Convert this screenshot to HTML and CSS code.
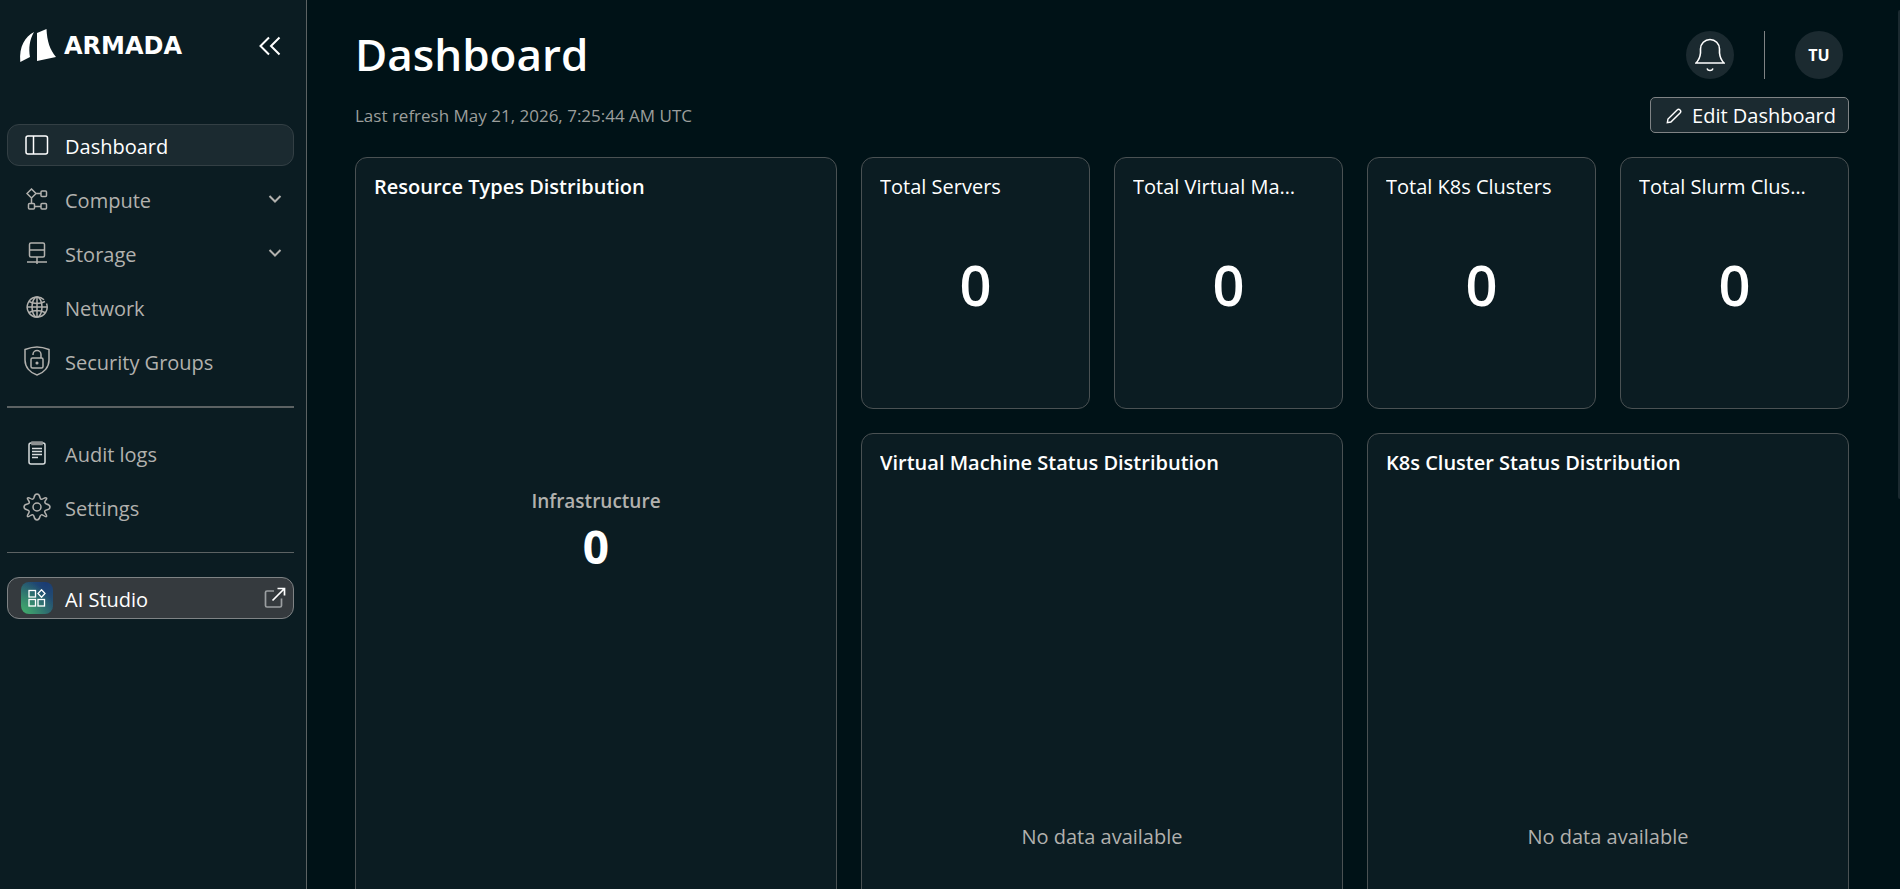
FILE: index.html
```html
<!DOCTYPE html>
<html lang="en">
<head>
  <meta charset="UTF-8" />
  <title>Dashboard</title>
  <meta name="viewport" content="width=device-width, initial-scale=1" />
  <link rel="stylesheet" href="styles.css">
</head>
<body>
  <aside class="sidebar">
    <div class="brand">
      <a class="logo" href="#" aria-label="Armada">
        <svg class="logo-mark" width="38" height="34" viewBox="0 0 38 34" fill="#fff">
          <path d="M15 3C6 8 0 17 1.300 33L11 28C9.500 19 10.500 11 15 3Z"/>
          <path d="M18 4L27.500 0C28 12 31 21 37 28L18 32Z"/>
        </svg>
        <span class="logo-text">ARMADA</span>
      </a>
      <button class="collapse-btn" title="Collapse menu">
        <svg width="22" height="20" viewBox="0 0 22 20" fill="none" stroke="#fff" stroke-width="2"><path d="M10 1.500L1.500 10L10 18.500M20.500 1.500L12 10L20.500 18.500"/></svg>
      </button>
    </div>

    <nav class="menu">
      <a class="menu-item active" href="#">
        <span class="menu-icon"><svg width="24" height="20" viewBox="0 0 24 20" fill="none" stroke="currentColor" stroke-width="1.500"><rect x="1" y="1" width="21.500" height="18" rx="2"/><path d="M8.500 1V19"/></svg></span>
        <span class="menu-label">Dashboard</span>
      </a>
      <a class="menu-item" href="#">
        <span class="menu-icon"><svg width="22" height="22" viewBox="0 0 22 22" fill="none" stroke="currentColor" stroke-width="1.500"><path d="M5.500 1L10 5.500L5.500 10L1 5.500ZM10 5.500H15M5.500 10V15.500M8.500 18.500H15"/><rect x="15" y="3" width="5.500" height="5.500" rx="1"/><rect x="2.500" y="15.500" width="6" height="5.500" rx="1"/><rect x="15" y="15.500" width="5.500" height="5.500" rx="1"/></svg></span>
        <span class="menu-label">Compute</span>
        <svg class="chevron" width="14" height="10" viewBox="0 0 14 10" fill="none" stroke="currentColor" stroke-width="2"><path d="M1.500 2L7 7.500L12.500 2"/></svg>
      </a>
      <a class="menu-item" href="#">
        <span class="menu-icon"><svg width="22" height="22" viewBox="0 0 22 22" fill="none" stroke="currentColor" stroke-width="1.500"><rect x="3.500" y="1" width="15" height="14" rx="1.500"/><path d="M3.500 8H18.500M11 15V22M1 20H21"/></svg></span>
        <span class="menu-label">Storage</span>
        <svg class="chevron" width="14" height="10" viewBox="0 0 14 10" fill="none" stroke="currentColor" stroke-width="2"><path d="M1.500 2L7 7.500L12.500 2"/></svg>
      </a>
      <a class="menu-item" href="#">
        <span class="menu-icon"><svg width="22" height="22" viewBox="0 0 22 22" fill="none" stroke="currentColor" stroke-width="1.500"><path d="M18 3.800A10 10 0 1 0 20.500 7.500M21 11H1"/><ellipse cx="11" cy="11" rx="5" ry="10"/><path d="M11 1V21M3 5.500C8 8 14 8 19 5.500M3 16.500C8 14 14 14 19 16.500"/></svg></span>
        <span class="menu-label">Network</span>
      </a>
      <a class="menu-item" href="#">
        <span class="menu-icon"><svg width="26" height="30" viewBox="0 0 26 30" fill="none" stroke="currentColor" stroke-width="1.500"><path d="M13 1C17 1 21 2 25 3.500V14C25 21 20 27 13 29C6 27 1 21 1 14V3.500C5 2 9 1 13 1Z"/><rect x="7" y="12" width="12" height="10" rx="1.500"/><path d="M9 9V8.500A4 4 0 0 1 17 8.500V12"/><circle cx="13" cy="17" r="0.800" fill="currentColor"/></svg></span>
        <span class="menu-label">Security Groups</span>
      </a>
    </nav>

    <nav class="menu ruled-strong">
      <a class="menu-item" href="#">
        <span class="menu-icon"><svg width="18" height="24" viewBox="0 0 18 24" fill="none" stroke="#d8dcdd" stroke-width="1.500"><rect x="1" y="2" width="16" height="21" rx="2"/><rect x="4" y="1" width="10" height="2.500" fill="#8d9192" stroke="#8d9192"/><path d="M4 7.500H14M4 10.500H14M4 13.500H14M4 16.500H10"/></svg></span>
        <span class="menu-label">Audit logs</span>
      </a>
      <a class="menu-item" href="#">
        <span class="menu-icon"><svg width="28" height="28" viewBox="0 0 28 28" fill="none" stroke="currentColor" stroke-width="1.500"><circle cx="14" cy="14" r="4"/><path d="M11 4.500C11.500 2 12.500 1 14 1S16.500 2 17 4.500S19 6.500 20.500 5.500S23 4.500 23.500 5S23.500 6.500 22.500 7.500S21.500 10.500 23.500 11S27 12.500 27 14S26 16.500 23.500 17S21.500 19 22.500 20.500S24 23 23.500 23.500S22 23.500 20.500 22.500S17.500 21.500 17 23.500S15.500 27 14 27S11.500 26 11 23.500S9 21.500 7.500 22.500S5 24 4.500 23.500S4.500 22 5.500 20.500S6.500 17.500 4.500 17S1 15.500 1 14S2 11.500 4.500 11S6.500 9 5.500 7.500S4 5.500 4.500 5S6 4.500 7.500 5.500S10.500 6.500 11 4.500Z"/></svg></span>
        <span class="menu-label">Settings</span>
      </a>
    </nav>

    <nav class="menu">
      <a class="menu-item studio" href="#">
        <span class="studio-icon"><svg width="18" height="18" viewBox="0 0 18 18" fill="none" stroke="#fff" stroke-width="1.300"><rect x="1" y="1.500" width="6.500" height="6.500"/><path d="M13.500 0.800L17 4.500L13.500 8.200L10 4.500Z"/><rect x="1" y="10.500" width="6.500" height="6.500"/><rect x="10" y="10.500" width="6.500" height="6.500"/></svg></span>
        <span class="menu-label">AI Studio</span>
        <svg class="external" width="22" height="22" viewBox="0 0 22 22" fill="none" stroke-width="1.700"><path stroke="#9b9fa1" d="M10 4H3C2 4 1.500 4.500 1.500 5.500V18.500C1.500 19.500 2 20 3 20H16C17 20 17.500 19.500 17.500 18.500V11.500"/><path stroke="#fff" d="M8.500 13.500L20.500 1.500M13.500 1.500H20.500V8.500"/></svg>
      </a>
    </nav>
  </aside>

  <main class="content">
    <header class="topbar">
      <h1>Dashboard</h1>
      <div class="user-tools">
        <button class="round-btn" title="Notifications">
          <svg width="30" height="34" viewBox="0 0 30 34" fill="none" stroke="#fff" stroke-width="1.600"><path d="M1 25H29C26 22 25 20 24.500 15V11A9.500 9.500 0 0 0 5.500 11V15C5 20 4 22 1 25Z"/><path d="M12 30.500C13 33.200 17 33.200 18 30.500"/></svg>
        </button>
        <span class="divider"></span>
        <button class="round-btn avatar" title="Account">TU</button>
      </div>
    </header>

    <div class="subbar">
      <p class="refresh">Last refresh May 21, 2026, 7:25:44 AM UTC</p>
      <button class="edit-btn">
        <svg width="16" height="16" viewBox="0 0 18 18" fill="none" stroke="#fff" stroke-width="1.600"><path d="M1.500 16.500L2.200 12.500L12.500 2.200C13.500 1.200 14.800 1.200 15.800 2.200S16.800 4.500 15.800 5.500L5.500 15.800Z"/></svg>
        Edit Dashboard
      </button>
    </div>

    <section class="widgets">
      <article class="card tall">
        <h2>Resource Types Distribution</h2>
        <div class="chart-center">
          <span class="chart-label">Infrastructure</span>
          <span class="chart-total">0</span>
        </div>
      </article>
      <article class="card stat">
        <h3>Total Servers</h3>
        <div class="stat-value">0</div>
      </article>
      <article class="card stat">
        <h3>Total Virtual Machines</h3>
        <div class="stat-value">0</div>
      </article>
      <article class="card stat">
        <h3>Total K8s Clusters</h3>
        <div class="stat-value">0</div>
      </article>
      <article class="card stat">
        <h3>Total Slurm Clusters</h3>
        <div class="stat-value">0</div>
      </article>
      <article class="card wide">
        <h2>Virtual Machine Status Distribution</h2>
        <p class="empty">No data available</p>
      </article>
      <article class="card wide">
        <h2>K8s Cluster Status Distribution</h2>
        <p class="empty">No data available</p>
      </article>
    </section>
  </main>
  <div class="scroll-thumb"></div>
</body>
</html>
```
FILE: styles.css
```css
* {
  box-sizing: border-box;
}
body {
  margin: 0;
  height: 100vh;
  display: flex;
  overflow: hidden;
  background: #001217;
  color: #fff;
  font-family: 'Segoe UI', 'Open Sans', sans-serif;
  font-size: 20px;
  line-height: 28px;
}
h1, h2, h3, p {
  margin: 0;
}
button {
  font: inherit;
  color: inherit;
  cursor: pointer;
}
svg {
  display: block;
  flex-shrink: 0;
}
.sidebar {
  flex: 0 0 307px;
  padding: 24px 12px 0 7px;
  background: #0b1c22;
  border-right: 1px solid #5c6263;
}
.brand {
  display: flex;
  align-items: center;
  justify-content: space-between;
  height: 44px;
  padding: 0 13px 0 12px;
  margin-bottom: 56px;
}
.logo {
  display: flex;
  align-items: center;
  gap: 7px;
  color: #fff;
  text-decoration: none;
}
.logo-text {
  font-family: 'DejaVu Sans', sans-serif;
  font-size: 24px;
  font-weight: bold;
}
.collapse-btn {
  padding: 0;
  background: none;
  border: none;
}
.menu {
  display: flex;
  flex-direction: column;
  gap: 12px;
}
.menu + .menu {
  margin-top: 24px;
  padding-top: 24px;
  border-top: 1px solid #5c6263;
}
.menu + .ruled-strong {
  border-top-width: 2px;
}
.menu-item {
  display: flex;
  align-items: center;
  height: 42px;
  padding: 0 7px 0 13px;
  gap: 12px;
  border: 1px solid transparent;
  border-radius: 12px;
  color: #b2b1ae;
  text-decoration: none;
}
.menu-item.active {
  background: #1b2a30;
  border-color: #333f44;
  color: #fff;
}
.menu-icon, .studio-icon {
  display: flex;
  align-items: center;
  justify-content: center;
  width: 32px;
  height: 32px;
}
.menu-label {
  padding-top: 3px;
}
.chevron {
  margin-left: auto;
  margin-right: 4px;
}
.menu-item.studio {
  background: #353a3e;
  border-color: #7f8385;
  color: #fff;
}
.studio-icon {
  border-radius: 8px;
  background: radial-gradient(circle at 0 100%, #3fa56c 10%, transparent 75%), radial-gradient(circle at 80% 0, #1a3a74, #2c6270 90%);
}
.external {
  margin-left: auto;
}
.content {
  flex: 1;
  min-width: 0;
  padding: 30px 51px 76px 48px;
  overflow-y: auto;
  scrollbar-width: none;
}
.scroll-thumb {
  position: absolute;
  top: 10px;
  right: 0;
  width: 2px;
  height: 55%;
  border-radius: 2px 0 0 2px;
  background: #1b2a30;
}
.topbar, .subbar {
  display: flex;
  align-items: center;
  justify-content: space-between;
}
.topbar {
  height: 50px;
}
h1 {
  padding-bottom: 2px;
  font-size: 44px;
  font-weight: 600;
  line-height: 48px;
}
.user-tools {
  display: flex;
  align-items: center;
  gap: 30px;
  padding-right: 6px;
}
.round-btn {
  display: flex;
  align-items: center;
  justify-content: center;
  width: 48px;
  height: 48px;
  padding: 0;
  border: none;
  border-radius: 50%;
  background: #1b2a30;
}
.avatar {
  font-size: 16px;
  font-weight: bold;
}
.divider {
  width: 1px;
  height: 48px;
  background: #7f8385;
}
.subbar {
  margin: 17px 0 24px;
}
.refresh {
  padding-top: 2px;
  font-size: 17px;
  color: #9b9e9c;
}
.edit-btn {
  display: flex;
  align-items: center;
  gap: 10px;
  height: 36px;
  padding: 2px 12px 0 15px;
  background: #1b2a30;
  border: 1px solid #7f8385;
  border-radius: 5px;
}
.widgets {
  display: grid;
  grid-template-columns: repeat(6, 1fr);
  grid-template-rows: repeat(5, 252px);
  gap: 24px;
}
.card {
  display: flex;
  flex-direction: column;
  min-width: 0;
  padding: 15px 18px 18px;
  background: #0b1c22;
  border: 1px solid #4a5153;
  border-radius: 12px;
}
.card h2, .card h3 {
  font-size: 20px;
  line-height: 28px;
  overflow: hidden;
  white-space: nowrap;
  text-overflow: ellipsis;
}
.card h2 {
  font-weight: 600;
}
.card h3 {
  margin-right: 24px;
  font-weight: normal;
}
.tall {
  grid-column: span 2;
  grid-row: span 4;
}
.wide {
  grid-column: span 2;
  grid-row: span 3;
}
.chart-center {
  display: flex;
  flex-direction: column;
  align-items: center;
  margin-top: 286px;
}
.chart-label {
  font-size: 19px;
  font-weight: 600;
  color: #b2b1ae;
}
.chart-total {
  font-size: 46px;
  font-weight: bold;
  line-height: 62px;
}
.stat-value {
  margin-top: 50px;
  font-size: 56px;
  font-weight: 600;
  line-height: 66px;
  text-align: center;
}
.empty {
  margin-top: 346px;
  text-align: center;
  color: #b2b1ae;
}
```
